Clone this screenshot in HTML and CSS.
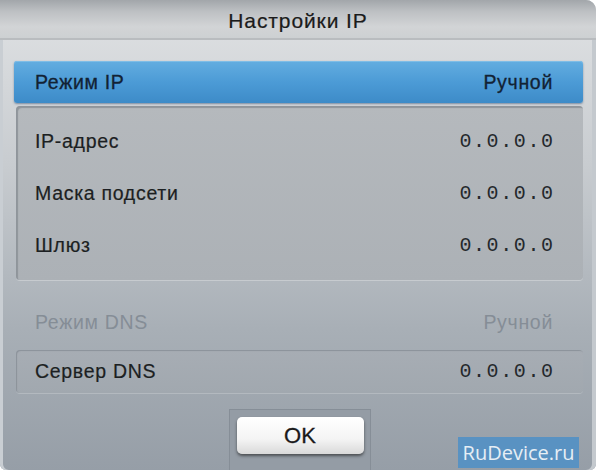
FILE: index.html
```html
<!DOCTYPE html>
<html lang="ru">
<head>
    <meta charset="UTF-8">
    <title>Настройки IP</title>
    <link rel="stylesheet" href="styles.css">
</head>
<body>

    <div class="dialog">
        <div class="title">Настройки IP</div>

        <div class="content">
            <div class="row selected">
                <span>Режим IP</span>
                <span>Ручной</span>
            </div>

            <div class="panel">
                <div class="row">
                    <span>IP-адрес</span>
                    <span class="ip">0.0.0.0</span>
                </div>
                <div class="row">
                    <span>Маска подсети</span>
                    <span class="ip">0.0.0.0</span>
                </div>
                <div class="row">
                    <span>Шлюз</span>
                    <span class="ip">0.0.0.0</span>
                </div>
            </div>

            <div class="row disabled">
                <span>Режим DNS</span>
                <span>Ручной</span>
            </div>

            <div class="panel dns">
                <div class="row">
                    <span>Сервер DNS</span>
                    <span class="ip">0.0.0.0</span>
                </div>
            </div>

            <div class="buttons">
                <button class="btn">OK</button>
            </div>
        </div>

        <!-- watermark over the corner -->
        <div class="mark">RuDevice.ru</div>
    </div>

</body>
</html>
```

FILE: styles.css
```css
body {
    margin: 0;
    background-color: #ffffff;
    font-family: "Liberation Sans", Arial, sans-serif;
}

.dialog {
    position: relative;
    width: 596px;
    height: 470px;
    display: flex;
    flex-direction: column;
    border-radius: 0 10px 6px 6px;
    overflow: hidden;
    background: linear-gradient(to bottom, #e0e2e4 0%, #c8ccd0 35%, #a8afb6 70%, #969ea7 100%);
    box-shadow: inset 3px 0 0 #c9ced3, inset -4px 0 0 #c4c9ce;
}

/* Title bar */
.title {
    height: 38px;
    line-height: 41px;
    text-align: center;
    font-size: 21px;
    letter-spacing: 0.9px;
    color: #1b1b1b;
    -webkit-text-stroke: 0.2px #1b1b1b;
    background: linear-gradient(to bottom, #a2a6aa 0%, #bdc0c3 30%, #d2d4d6 70%, #cdd0d2 100%);
    border-bottom: 2px solid #b9bcbf;
}

.content {
    padding: 21px 13px 0 14px;
    display: flex;
    flex-direction: column;
}

.row {
    display: flex;
    justify-content: space-between;
    align-items: center;
    font-size: 19.5px;
    letter-spacing: 0.7px;
    color: #1c1f22;
    -webkit-text-stroke: 0.2px #1c1f22;
    padding: 0 30px 0 21px;
    height: 52px;
}

.row.selected {
    height: 42px;
    padding-left: 21px;
    border-radius: 3px;
    color: #122234;
    -webkit-text-stroke: 0.3px #122234;
    background: linear-gradient(to bottom, #63ade0 0%, #4c9bd6 50%, #3d8bc8 100%);
    box-shadow: 0 1px 2px rgba(40, 70, 110, 0.5), inset 0 1px 0 #7fbde6;
}

.panel {
    margin: 3px 0 0 2px;
    padding: 9px 0;
    border-radius: 4px;
    background: linear-gradient(to bottom, #b5b9bd, #acb1b6);
    box-shadow: inset 2px 2px 1px #8f959b, 0 1px 0 #c7cbcf;
}

.panel .row {
    padding-left: 19px;
}

.ip {
    font-family: "Liberation Mono", "DejaVu Sans Mono", monospace;
    font-size: 20px;
    letter-spacing: 1.6px;
    margin-right: -1.6px;
    color: #24282c;
    -webkit-text-stroke: 0;
}

.row.disabled {
    margin-top: 20px;
    height: 44px;
    color: #858d96;
    -webkit-text-stroke: 0;
}

.panel.dns {
    margin-top: 6px;
    padding: 0;
    background: linear-gradient(to bottom, #a7adb4, #a1a8af);
    box-shadow: inset 1px 1px 1px #8b929a, 0 1px 0 #b3b9bf;
}

.panel.dns .row {
    height: 43px;
}

/* OK */
.buttons {
    align-self: center;
    margin: 16px 0 0 2px;
    padding: 8px 7px 16px 8px;
    width: 127px;
    height: 37px;
    background-color: #949ca5;
    box-shadow: inset 1px 1px 0 #868e97, inset -1px 0 0 #868e97;
}

.btn {
    width: 127px;
    height: 37px;
    border: none;
    border-radius: 5px;
    font-family: "Liberation Sans", Arial, sans-serif;
    font-size: 22px;
    color: #1a1a1a;
    -webkit-text-stroke: 0.3px #1a1a1a;
    background: linear-gradient(to bottom, #ffffff 0%, #f4f4f4 60%, #d9d9d9 100%);
    box-shadow: 0 2px 3px rgba(30, 30, 30, 0.6);
    cursor: pointer;
}

.mark {
    position: absolute;
    left: 458px;
    top: 437px;
    width: 121px;
    height: 31px;
    line-height: 31px;
    text-align: center;
    font-family: "Open Sans", sans-serif;
    font-size: 20px;
    color: #e6eef5;
    background-color: rgba(77, 143, 199, 0.85);
}
```
